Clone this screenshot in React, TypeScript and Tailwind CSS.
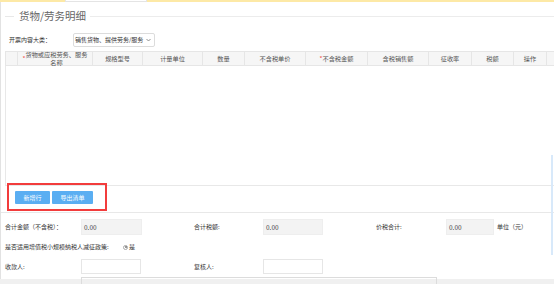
import React from "react";

const cols: { w: number; t: React.ReactNode }[] = [
  { w: 12, t: "" },
  {
    w: 75,
    t: (
      <>
        <span className="text-[#f04848]">*</span> 货物或应税劳务、服务
        <br />
        名称
      </>
    ),
  },
  { w: 50, t: "规格型号" },
  { w: 60, t: "计量单位" },
  { w: 42, t: "数量" },
  { w: 61, t: "不含税单价" },
  {
    w: 62,
    t: (
      <>
        <span className="text-[#f04848]">*</span> 不含税金额
      </>
    ),
  },
  { w: 61, t: "含税销售额" },
  { w: 43, t: "征收率" },
  { w: 42, t: "税额" },
  { w: 33, t: "操作" },
];

export default function App() {
  return (
    <div className="relative w-[554px] h-[284px] overflow-hidden bg-[#f0f0f0] text-[#333] font-['Noto_Sans_CJK_SC',sans-serif]">
      <div className="h-[2px] bg-[#fde9a6]" />
      <div className="absolute left-[65px] top-[-10px] w-[82px] h-[12px] border border-[#e4e4e4] bg-white" />

      <div className="h-[277px] bg-white border-l border-[#e2e2e2] flex flex-col">
        {/* legend */}
        <div className="shrink-0 mt-[3px] h-[22px] flex items-center">
          <div className="ml-[4px] w-[9px] h-px bg-[#e8e8e8]" />
          <span className="ml-[5px] text-[10.5px] leading-none text-[#666]">货物/劳务明细</span>
          <div className="ml-[4px] flex-1 h-px bg-[#ececec]" />
        </div>

        {/* select row */}
        <div className="shrink-0 mt-[6px] h-[14px] flex items-center pl-[8px]">
          <span className="w-[64px] text-[6px] leading-none">开票内容大类：</span>
          <div className="w-[82px] h-[14px] border border-[#dcdcdc] rounded-[2px] flex items-center justify-between pl-[1px] pr-[2px]">
            <span className="text-[6px] leading-none text-[#333]">销售货物、提供劳务/服务</span>
            <svg width="5" height="4" viewBox="0 0 5 4" className="mr-[1px]">
              <polyline points="0.5,1 2.5,3 4.5,1" fill="none" stroke="#777" strokeWidth="0.8" />
            </svg>
          </div>
        </div>

        {/* table */}
        <div className="shrink-0 mt-[4px] ml-[4px] flex flex-col">
          <div className="shrink-0 h-[15px] flex bg-[#f6f6f6] border-y border-l border-[#e6e6e6]">
            {cols.map((c, i) => (
              <div
                key={i}
                style={{ width: c.w }}
                className="shrink-0 border-r border-[#e6e6e6] flex items-center justify-center text-center text-[6.2px] leading-[7.5px] text-[#555]"
              >
                {c.t}
              </div>
            ))}
            <div className="flex-1" />
          </div>
          <div className="shrink-0 h-[120px] border-l border-b border-[#e8e8e8] bg-white" />
        </div>

        {/* footer with buttons */}
        <div className="shrink-0 h-[27px] border-b border-[#e8e8e8] pt-[5px] pl-[14px] flex items-start gap-[2px]">
          <div className="w-[35px] h-[13px] bg-[#5aaef2] rounded-[1px] flex items-center justify-center text-white text-[6px] leading-none">
            新增行
          </div>
          <div className="w-[41px] h-[13px] bg-[#5aaef2] rounded-[1px] flex items-center justify-center text-white text-[6px] leading-none">
            导出清单
          </div>
        </div>

        {/* row 1 */}
        <div className="shrink-0 mt-[6px] h-[16px] flex items-center pl-[4px] text-[6px] leading-none">
          <span className="w-[76px] shrink-0">合计金额（不含税）：</span>
          <div className="w-[61px] h-[16px] shrink-0 bg-[#f3f3f3] border border-[#eeeeee] flex items-center pl-[2px] text-[6.5px] text-[#444]">0.00</div>
          <span className="ml-[52px] w-[69px] shrink-0">合计税额:</span>
          <div className="w-[60px] h-[16px] shrink-0 bg-[#f3f3f3] border border-[#eeeeee] flex items-center pl-[2px] text-[6.5px] text-[#444]">0.00</div>
          <span className="ml-[53px] w-[70px] shrink-0">价税合计:</span>
          <div className="w-[48px] h-[16px] shrink-0 bg-[#f3f3f3] border border-[#eeeeee] flex items-center pl-[2px] text-[6.5px] text-[#444]">0.00</div>
          <span className="ml-[3px]">单位（元）</span>
        </div>

        {/* row 2 */}
        <div className="shrink-0 mt-[6px] h-[12px] flex items-center pl-[4px] text-[6px] leading-none">
          <span className="w-[118px] shrink-0">是否适用增值税小规模纳税人减征政策:</span>
          <span className="w-[5px] h-[5px] rounded-full border border-[#a8a8a8] flex items-center justify-center">
            <span className="w-[2px] h-[2px] rounded-full bg-[#777]" />
          </span>
          <span className="ml-[1px]">是</span>
        </div>

        {/* row 3 */}
        <div className="shrink-0 mt-[6px] h-[15px] flex items-center pl-[4px] text-[6px] leading-none">
          <span className="w-[76px] shrink-0">收款人:</span>
          <div className="w-[60px] h-[15px] shrink-0 bg-white border border-[#e6e6e6]" />
          <span className="ml-[53px] w-[69px] shrink-0">复核人:</span>
          <div className="w-[60px] h-[15px] shrink-0 bg-white border border-[#e6e6e6]" />
        </div>

        {/* cut-off next row */}
        <div className="shrink-0 mt-[3px] pl-[80px]">
          <div className="w-[356px] h-[12px] border border-[#dcdcdc]" />
        </div>
      </div>

      <div className="absolute right-[1px] top-[155px] w-[2px] h-[100px] bg-[#d8e9fa]" />

      {/* annotation box */}
      <div className="absolute left-[7px] top-[183px] w-[100px] h-[28px] border-2 border-[#f23c3c]" />
    </div>
  );
}
